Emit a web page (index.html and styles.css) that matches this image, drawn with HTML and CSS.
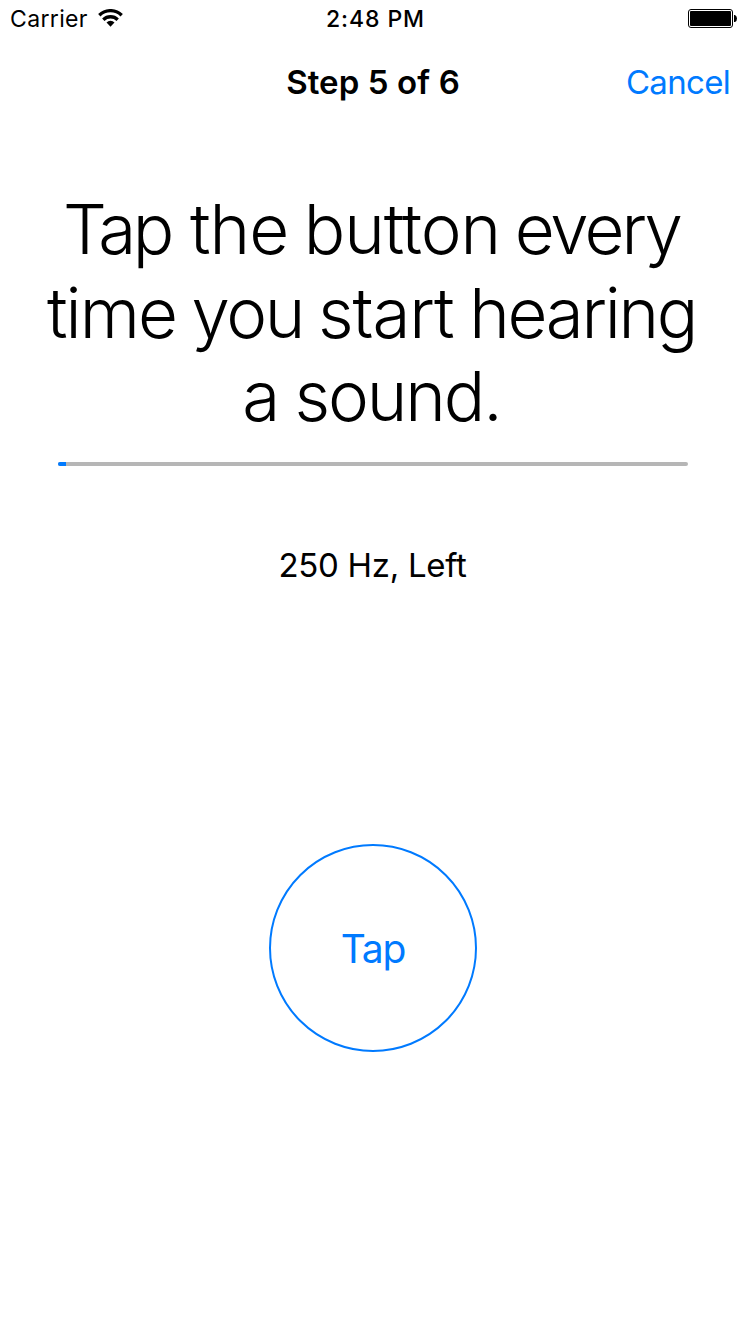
FILE: index.html
```html
<!DOCTYPE html>
<html lang="en">
<head>
<meta charset="utf-8">
<title>Step 5 of 6</title>
<link rel="stylesheet" href="styles.css">
</head>
<body>
<header class="status">
  <div class="status-left"><span class="carrier">Carrier</span>
    <svg class="wifi" width="25" height="18" viewBox="0 0 25 18"><g fill="none" stroke="#000" stroke-width="3.300"><path d="M1.300 6.200a16 16 0 0 1 22.400 0"/><path d="M5.300 10.700a10.300 10.300 0 0 1 14.400 0"/></g><path d="M12.500 17.800l-4-4.400a5.800 5.800 0 0 1 8 0z"/></svg>
  </div>
  <span class="time">2:48 PM</span>
  <svg class="battery" width="50" height="20" viewBox="0 0 50 20"><rect x=".5" y=".5" width="44" height="18" rx="2.500" fill="none" stroke="#000"/><rect x="2" y="2" width="41" height="15" rx="1"/><path d="M46 6h1q2 1 2 3.500t-2 3.500h-1z"/></svg>
</header>
<nav class="nav"><h1 class="title">Step 5 of 6</h1><a class="cancel">Cancel</a></nav>
<main class="content">
  <p class="instruction"><span class="line"><span class="word-tap">Tap</span> <span class="word-the">the</span> <span class="word-button">button</span> <span class="word-every">every</span></span><span class="line"><span class="word-time">time</span> <span class="word-you">you</span> <span class="word-start">start</span> <span class="word-hearing">hearing</span></span><span class="line line-three">a sound.</span></p>
  <div class="progress"><div class="progress-fill"></div></div>
  <p class="frequency">250 Hz, Left</p>
  <button class="tap"><span class="tap-label">Tap</span></button>
</main>
</body>
</html>
```
FILE: styles.css
```css
* { box-sizing: border-box; }
body { margin: 0; height: 1332px; background: #fff; color: #000; font-family: Inter, "Liberation Sans", sans-serif; }
.status { display: grid; grid-template-columns: 1fr auto 1fr; align-items: center; height: 38px; padding: 0 8px 0 10px; }
.status-left { display: flex; align-items: center; gap: 10px; }
.carrier { font-size: 23px; letter-spacing: .35px; }
.wifi { margin-bottom: 2px; }
.time { margin-left: 3px; font-size: 23px; font-weight: 550; letter-spacing: .9px; }
.battery { justify-self: end; }
.nav { display: grid; grid-template-columns: 1fr auto 1fr; align-items: center; height: 88px; padding: 0 15px; }
.title { grid-column: 2; margin: 0; font-size: 33px; font-weight: 600; letter-spacing: .1px; }
.cancel { justify-self: end; margin-right: 1px; color: #007aff; font-size: 33px; letter-spacing: -.7px; }
.content { display: flex; flex-direction: column; align-items: center; }
.instruction { margin: 62px 0 0; font-size: 69px; font-weight: 320; line-height: 83.500px; text-align: center; letter-spacing: -1.950px; word-spacing: -1px; }
.line { display: block; padding-right: 3px; white-space: nowrap; }
.word-tap { margin-right: 2.500px; letter-spacing: -3.400px; }
.word-the { margin-right: -1px; letter-spacing: -1px; }
.word-button { margin-right: -1.900px; letter-spacing: -1.050px; }
.word-every { letter-spacing: -2.900px; }
.word-time { margin-right: -1px; }
.word-you { margin-right: -1.600px; letter-spacing: -2.300px; }
.word-start { margin-right: -.850px; letter-spacing: -1.100px; }
.word-hearing { letter-spacing: -2.300px; }
.line-three { letter-spacing: -2.100px; }
.progress { width: 630px; height: 4px; margin-top: 23px; border-radius: 2px; background: #b6b6b6; overflow: hidden; }
.progress-fill { width: 8px; height: 4px; background: #007aff; }
.frequency { margin: 79px 0 0; padding-right: 1px; font-size: 33px; line-height: 40px; letter-spacing: -.3px; }
.tap { width: 208px; height: 208px; margin-top: 259px; padding: 1px 0 0; border: 2px solid #007aff; border-radius: 50%; background: none; color: #007aff; font: 400 39px Inter, "Liberation Sans", sans-serif; letter-spacing: -1.200px; }
```
